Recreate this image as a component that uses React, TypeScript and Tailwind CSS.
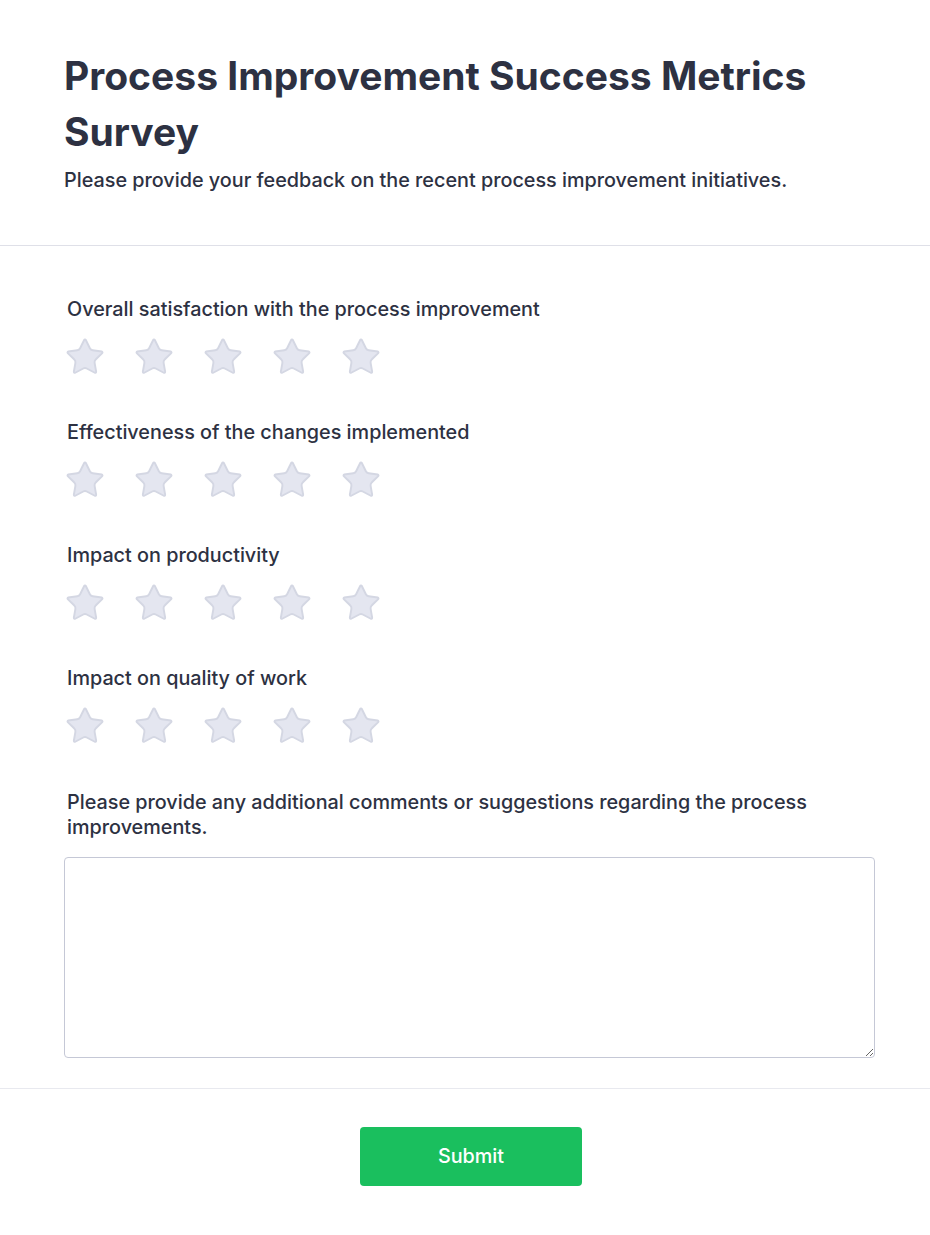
import { Star } from "lucide-react";

const questions = [
  "Overall satisfaction with the process improvement",
  "Effectiveness of the changes implemented",
  "Impact on productivity",
  "Impact on quality of work",
];

export default function App() {
  return (
    <div className="min-h-screen bg-white text-[#2d3142] font-['Inter','Noto_Sans',sans-serif]">
      {/* header */}
      <div className="pl-16 pr-12 pt-[48px] pb-[51px] border-b border-[#dfe0e8]">
        <h1 className="text-[39px] leading-[56px] font-bold">
          Process Improvement Success Metrics Survey
        </h1>
        <p className="text-[19.8px] leading-[28px] font-medium mt-[6px]">
          Please provide your feedback on the recent process improvement initiatives.
        </p>
      </div>

      {/* questions */}
      <div className="pl-16 pr-[55px] pt-[50px] pb-[30px] border-b border-[#e8e9ef]">
        {questions.map((q) => (
          <div key={q} className="mb-[41px]">
            <p className="pl-[3px] text-[19.8px] leading-[26px] font-medium">{q}</p>
            <div className="flex gap-[27px] mt-[14px]">
              {[0, 1, 2, 3, 4].map((i) => (
                <Star
                  key={i}
                  size={42}
                  strokeWidth={1.1}
                  className="fill-[#e4e6f0] text-[#d4d7e3]"
                />
              ))}
            </div>
          </div>
        ))}

        <p className="pl-[3px] pt-[2px] text-[19.8px] leading-[25px] font-medium">
          Please provide any additional comments or suggestions regarding the process improvements.
        </p>
        <textarea className="block w-full h-[201px] mt-[17px] rounded-[4px] border border-[#c5c8d6] resize-y outline-none" />
      </div>

      {/* footer */}
      <div className="flex justify-center pl-16 pr-[52px] pt-[38px] pb-[48px]">
        <button className="w-[222px] h-[59px] rounded-[4px] bg-[#1abf5e] text-white text-[19.8px] font-medium">
          Submit
        </button>
      </div>
    </div>
  );
}
